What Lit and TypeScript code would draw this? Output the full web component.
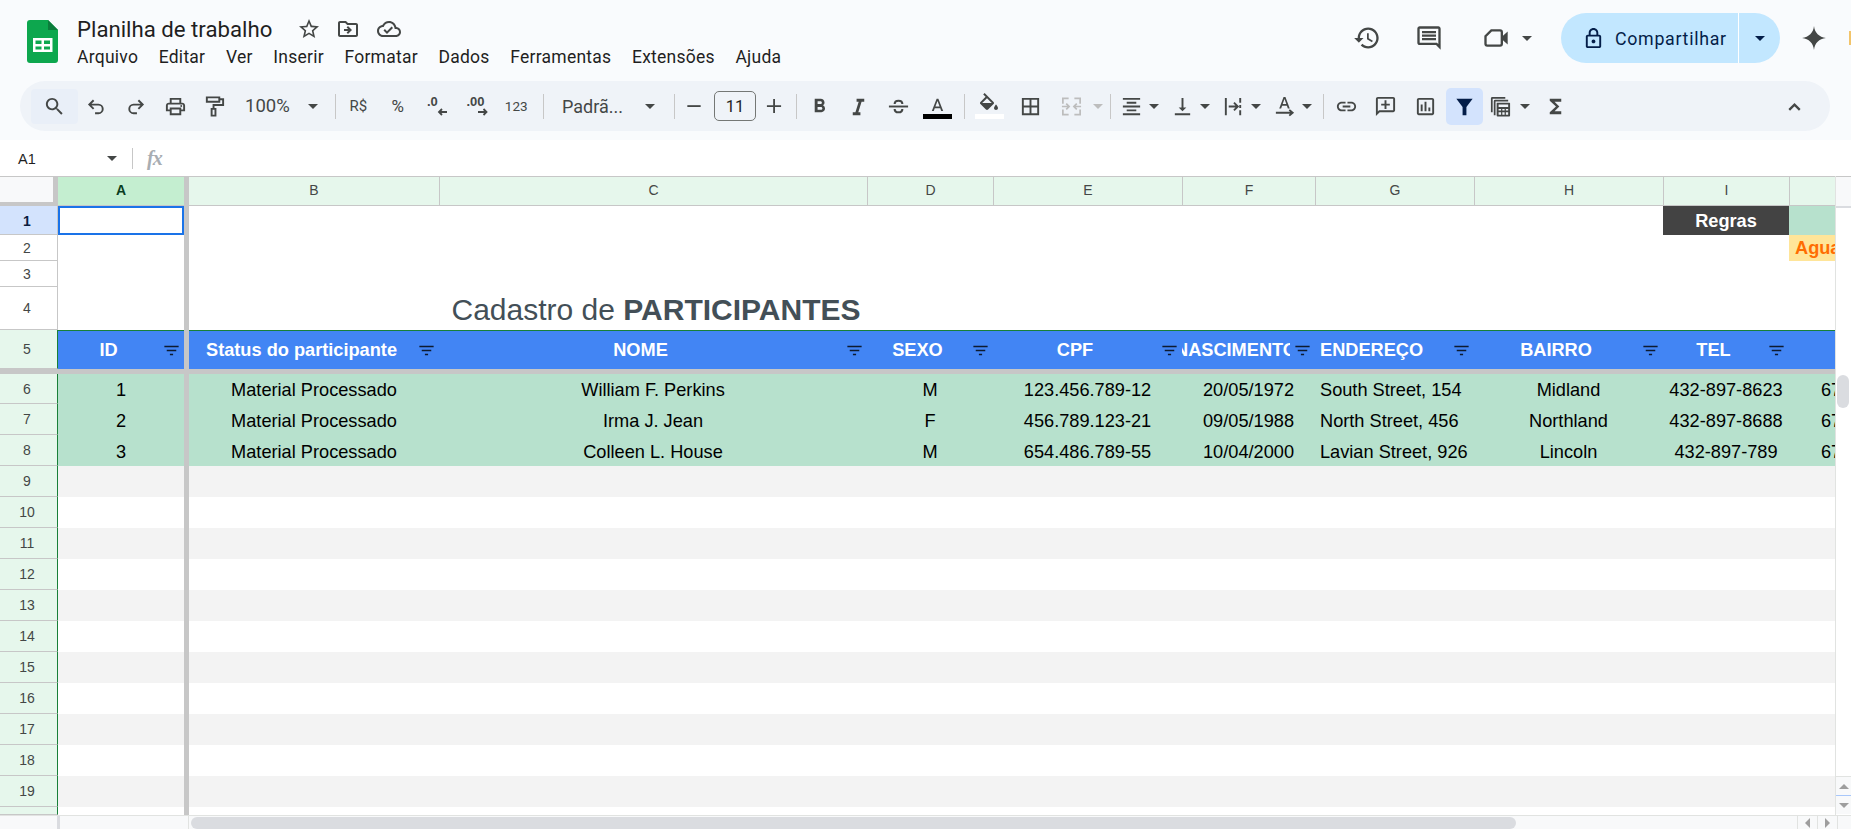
import { LitElement, html, css, svg } from "lit";
import { customElement } from "lit/decorators.js";

const P: Record<string, any> = {
  star: svg`<path d="M22 9.24l-7.19-.62L12 2 9.19 8.63 2 9.24l5.46 4.73L5.82 21 12 17.27 18.18 21l-1.63-7.03L22 9.24zM12 15.4l-3.76 2.27 1-4.28-3.32-2.88 4.38-.38L12 6.1l1.71 4.04 4.38.38-3.32 2.88 1 4.28L12 15.4z"/>`,
  folder: svg`<path d="M20 6h-8l-2-2H4c-1.1 0-1.99.9-1.99 2L2 18c0 1.1.9 2 2 2h16c1.1 0 2-.9 2-2V8c0-1.1-.9-2-2-2zm0 12H4V6h5.17l2 2H20v10z"/><path d="M12.16 12H8v2h4.16l-1.59 1.59L11.98 17 16 13l-4.01-4-1.41 1.41z"/>`,
  cloud: svg`<path d="M19.35 10.04C18.67 6.59 15.64 4 12 4 9.11 4 6.6 5.64 5.35 8.04 2.34 8.36 0 10.91 0 14c0 3.31 2.69 6 6 6h13c2.76 0 5-2.24 5-5 0-2.64-2.05-4.78-4.65-4.96zM19 18H6c-2.21 0-4-1.79-4-4 0-2.05 1.53-3.76 3.56-3.97l1.07-.11.5-.95C8.08 7.14 9.94 6 12 6c2.62 0 4.88 1.86 5.39 4.43l.3 1.5 1.53.11c1.56.1 2.78 1.41 2.78 2.96 0 1.65-1.35 3-3 3zm-9-3.82l-2.09-2.09L6.5 13.5 10 17l6.01-6.01-1.41-1.41z"/>`,
  history: svg`<path d="M13 3c-4.97 0-9 4.03-9 9H1l3.89 3.89.07.14L9 12H6c0-3.87 3.13-7 7-7s7 3.13 7 7-3.13 7-7 7c-1.93 0-3.68-.79-4.94-2.06l-1.42 1.42C8.27 19.99 10.51 21 13 21c4.97 0 9-4.03 9-9s-4.03-9-9-9zm-1 5v5l4.28 2.54.72-1.21-3.5-2.08V8H12z"/>`,
  chat: svg`<path d="M21.99 4c0-1.1-.89-2-1.99-2H4c-1.1 0-2 .9-2 2v12c0 1.1.9 2 2 2h14l4 4-.01-18zM20 4v13.17L18.83 16H4V4h16zM6 12h12v2H6zm0-3h12v2H6zm0-3h12v2H6z"/>`,
  video: svg`<path d="M8 5.5h7.5a1.5 1.5 0 0 1 1.5 1.5v10a1.5 1.5 0 0 1-1.5 1.5H4.5A1.5 1.5 0 0 1 3 17V10.5z" fill="none" stroke="currentColor" stroke-width="2"/><path d="M17.5 10.5L22 6.5v11l-4.5-4z"/>`,
  lock: svg`<path d="M18 8h-1V6c0-2.76-2.24-5-5-5S7 3.24 7 6v2H6c-1.1 0-2 .9-2 2v10c0 1.1.9 2 2 2h12c1.1 0 2-.9 2-2V10c0-1.1-.9-2-2-2zM9 6c0-1.66 1.34-3 3-3s3 1.34 3 3v2H9V6zm9 14H6V10h12v10zm-6-3c1.1 0 2-.9 2-2s-.9-2-2-2-2 .9-2 2 .9 2 2 2z"/>`,
  gemini: svg`<path d="M12 1C12.7 7.3 16.7 11.3 23 12c-6.3.7-10.3 4.7-11 11-.7-6.3-4.7-10.3-11-11 6.3-.7 10.3-4.7 11-11z"/>`,
  search: svg`<path d="M15.5 14h-.79l-.28-.27C15.41 12.59 16 11.11 16 9.5 16 5.91 13.09 3 9.5 3S3 5.91 3 9.5 5.91 16 9.5 16c1.61 0 3.09-.59 4.23-1.57l.27.28v.79l5 4.99L20.49 19l-4.99-5zm-6 0C7.01 14 5 11.99 5 9.5S7.01 5 9.5 5 14 7.01 14 9.5 11.99 14 9.5 14z"/>`,
  undo: svg`<path d="M9 14.5L4.5 10 9 5.5M5 10h9a4.5 4.5 0 0 1 0 9h-3.5" fill="none" stroke="currentColor" stroke-width="2"/>`,
  redo: svg`<path d="M15 14.5L19.5 10 15 5.5M19 10h-9a4.5 4.5 0 0 0 0 9h3.5" fill="none" stroke="currentColor" stroke-width="2"/>`,
  print: svg`<path d="M19 8h-1V3H6v5H5c-1.66 0-3 1.34-3 3v6h4v4h12v-4h4v-6c0-1.66-1.34-3-3-3zM8 5h8v3H8V5zm8 12v2H8v-4h8v2zm2-2v-2H6v2H4v-4c0-.55.45-1 1-1h14c.55 0 1 .45 1 1v4h-2z"/><circle cx="18" cy="11.5" r="1"/>`,
  paint: svg`<path d="M4 2.5h13v4.5H4zM17 4.5h4v6H11v4M9 14.5h4v7H9z" fill="none" stroke="currentColor" stroke-width="2"/>`,
  minus: svg`<path d="M4 11h16v2.2H4z"/>`,
  plus: svg`<path d="M3.5 11h7.5V3.5h2.2V11h7.3v2.2h-7.3v7.3H11v-7.3H3.5z"/>`,
  bold: svg`<path d="M15.6 10.79c.97-.67 1.65-1.77 1.65-2.79 0-2.26-1.75-4-4-4H7v14h7.04c2.09 0 3.71-1.7 3.71-3.79 0-1.52-.86-2.82-2.15-3.42zM10 6.5h3c.83 0 1.5.67 1.5 1.5s-.67 1.5-1.5 1.5h-3v-3zm3.5 9H10v-3h3.5c.83 0 1.5.67 1.5 1.5s-.67 1.5-1.5 1.5z"/>`,
  italic: svg`<path d="M10 4v3h2.21l-3.42 11H6v3h8v-3h-2.21l3.42-11H18V4z"/>`,
  strike: svg`<path d="M2 11h20v2H2z"/><path d="M8 9.5C8 7.5 9.6 6 12 6s4 1.5 4 3.5M8 14.5c0 2 1.6 3.5 4 3.5s4-1.5 4-3.5" fill="none" stroke="currentColor" stroke-width="2.2"/>`,
  atext: svg`<path d="M11 3L5.5 17h2.25l1.12-3h6.25l1.12 3h2.25L13 3h-2zm-1.38 9L12 5.67 14.38 12H9.62z"/>`,
  fill: svg`<path d="M16.56 8.94L7.62 0 6.21 1.41l2.38 2.38-5.15 5.15c-.59.59-.59 1.54 0 2.12l5.5 5.5c.29.29.68.44 1.06.44s.77-.15 1.06-.44l5.5-5.5c.59-.58.59-1.53 0-2.12zM5.21 10L10 5.21 14.79 10H5.21zM19 11.5s-2 2.17-2 3.5c0 1.1.9 2 2 2s2-.9 2-2c0-1.33-2-3.5-2-3.5z"/>`,
  borders: svg`<path d="M3 3v18h18V3H3zm8 16H5v-6h6v6zm0-8H5V5h6v6zm8 8h-6v-6h6v6zm0-8h-6V5h6v6z"/>`,
  merge: svg`<path d="M3 9V3.5h6M3 15v5.5h6M21 9V3.5h-6M21 15v5.5h-6" fill="none" stroke="currentColor" stroke-width="1.8"/><path d="M2 12h7M6.5 9l3 3-3 3M22 12h-7M17.5 9l-3 3 3 3" fill="none" stroke="currentColor" stroke-width="1.8"/>`,
  align: svg`<path d="M7 15v2h10v-2H7zm-4 6h18v-2H3v2zm0-8h18v-2H3v2zm4-6v2h10V7H7zM3 3v2h18V3H3z"/>`,
  valign: svg`<path d="M16 13h-3V3h-2v10H8l4 4 4-4zM4 19v2h16v-2H4z"/>`,
  wrap: svg`<path d="M4 3v18M19 3v5M19 10.5v3M19 16v5M7 12h9M12.5 8l4 4-4 4" fill="none" stroke="currentColor" stroke-width="2"/>`,
  rotate: svg`<path d="M11 2L6.5 14h2l1-2.8h5l1 2.8h2L13 2h-2zm-.9 7.5L12 4.3l1.9 5.2h-3.8z"/><path d="M3 18.5h16.5M17 15.5l3.5 3-3.5 3" fill="none" stroke="currentColor" stroke-width="2"/>`,
  link: svg`<path d="M3.9 12c0-1.71 1.39-3.1 3.1-3.1h4V7H7c-2.76 0-5 2.24-5 5s2.24 5 5 5h4v-1.9H7c-1.71 0-3.1-1.39-3.1-3.1zM8 13h8v-2H8v2zm9-6h-4v1.9h4c1.71 0 3.1 1.39 3.1 3.1s-1.39 3.1-3.1 3.1h-4V17h4c2.76 0 5-2.24 5-5s-2.24-5-5-5z"/>`,
  comment: svg`<path d="M20 2H4c-1.1 0-2 .9-2 2v18l4-4h14c1.1 0 2-.9 2-2V4c0-1.1-.9-2-2-2zm0 14H5.2L4 17.2V4h16v12z"/><path d="M11 5.5h2V9h3.5v2H13v3.5h-2V11H7.500V9H11z"/>`,
  chart: svg`<path d="M9 17H7v-7h2v7zm4 0h-2V7h2v10zm4 0h-2v-4h2v4zm2 2H5V5h14v14zm0-16H5c-1.1 0-2 .9-2 2v14c0 1.1.9 2 2 2h14c1.1 0 2-.9 2-2V5c0-1.1-.9-2-2-2z"/>`,
  funnel: svg`<path d="M3.5 4h17l-6.5 8.5V21h-4v-8.5z"/>`,
  calc: svg`<path d="M2 18V3.5A1.5 1.5 0 0 1 3.5 2H17v1.8H3.8V18zM5 21V6.5A1.5 1.5 0 0 1 6.5 5H20v1.8H6.8V21z"/><path d="M8 8h13.5a.5.5 0 0 1 .5.5v13a1 1 0 0 1-1 1H9a1 1 0 0 1-1-1zm2 2v2.5h10V10zm0 4.5v1.8h2.6v-1.8zm3.9 0v1.8h2.4v-1.8zm3.7 0v1.8H20v-1.8zM10 18v2.5h2.6V18zm3.9 0v2.5h2.4V18zm3.7 0v2.5H20V18z" fill-rule="evenodd"/>`,
  sigma: svg`<path d="M18 4H6v2l6.5 6L6 18v2h12v-3h-7l5-5-5-5h7z"/>`,
  chevron: svg`<path d="M6.5 15.5L12 10l5.5 5.5" fill="none" stroke="currentColor" stroke-width="2.4"/>`,
  filt: svg`<path d="M10 18h4v-2h-4v2zM3 6v2h18V6H3zm3 7h12v-2H6v2z"/>`,
};

const ic = (n: string, cls = "") => html`<svg class="i ${cls}" viewBox="0 0 24 24" fill="currentColor">${P[n]}</svg>`;
const caret = (cls = "") => html`<span class="caret ${cls}"></span>`;
const btn = (n: string, cls = "") => html`<span class="b ${cls}">${ic(n)}</span>`;
const grp = (n: string) => html`<span class="g">${ic(n)}${caret()}</span>`;
const sep = (cls = "") => html`<span class="sep ${cls}"></span>`;

const MENU = ["Arquivo", "Editar", "Ver", "Inserir", "Formatar", "Dados", "Ferramentas", "Extensões", "Ajuda"];
const COLS = ["B", "C", "D", "E", "F", "G", "H", "I", ""];
const HEADS: [string, string][] = [
  ["Status do participante", "ctr"], ["NOME", "ctr"], ["SEXO", "ctr"], ["CPF", "ctr"],
  ["NASCIMENTO", "ctr"], ["ENDEREÇO", "lft"], ["BAIRRO", "ctr"], ["TEL", "ctr"], ["", "ctr"],
];
const DATA = [
  ["1", "Material Processado", "William F. Perkins", "M", "123.456.789-12", "20/05/1972", "South Street, 154", "Midland", "432-897-8623", "67"],
  ["2", "Material Processado", "Irma J. Jean", "F", "456.789.123-21", "09/05/1988", "North Street, 456", "Northland", "432-897-8688", "67"],
  ["3", "Material Processado", "Colleen L. House", "M", "654.486.789-55", "10/04/2000", "Lavian Street, 926", "Lincoln", "432-897-789", "67"],
];

@customElement("app-root")
export class AppRoot extends LitElement {
  static styles = css`
    :host { display: block; width: 100%; height: 829px; overflow: hidden; background: #f9fbfd; font-family: Roboto, "Liberation Sans", sans-serif; color: #1f1f1f; }
    * { box-sizing: border-box; }
    .i { display: block; width: 23px; height: 23px; flex: none; color: #444746; }

    .top { display: flex; height: 81px; padding-left: 27px; }
    .logo { width: 31px; height: 43px; margin-top: 20px; flex: none; }
    .titles { margin-left: 19px; padding-top: 15px; }
    .tline { display: flex; align-items: center; height: 28px; }
    .tline .name { font-size: 22.2px; line-height: 28px; width: 220px; color: #1f1f1f; flex: none; }
    .tline .i { width: 24px; height: 24px; margin-right: 15px; }
    .tline .i.c { margin-left: 2px; }
    .menu { display: flex; margin-top: 1px; font-size: 17.5px; letter-spacing: .25px; line-height: 26px; color: #1f1f1f; }
    .menu span { margin-right: 20.6px; }
    .right { margin-left: auto; display: flex; align-items: center; height: 76px; }
    .right .i { width: 28px; height: 28px; }
    .hist { margin-right: 34px; }
    .vid { margin-left: 39px; }
    .vcaret { margin-left: 12px; margin-right: 29px; }
    .share { display: flex; align-items: stretch; width: 219px; height: 50px; background: #c2e7ff; border-radius: 25px; color: #041e49; }
    .share .main { display: flex; align-items: center; width: 178px; padding-left: 21px; border-right: 1px solid #fff; font-size: 17.8px; letter-spacing: .7px; white-space: nowrap; }
    .share .main .i { width: 23px; height: 23px; color: #041e49; margin-right: 10px; }
    .share .drop { flex: 1; display: flex; align-items: center; justify-content: center; }
    .caret { display: block; flex: none; width: 0; height: 0; border-left: 5px solid transparent; border-right: 5px solid transparent; border-top: 5px solid #444746; }
    .caret.dk { border-top-color: #041e49; }
    .caret.off { border-top-color: #bdbdbd; }
    .right .gem { width: 26px; height: 26px; margin-left: 21px; margin-right: 22px; }
    .avatar { width: 2px; height: 14px; background: #f2c46a; flex: none; }

    .tb { display: flex; align-items: center; height: 50px; margin: 0 21px 0 20px; padding-left: 11px; border-radius: 25px; background: #eff3f8; color: #444746; }
    .search { display: flex; align-items: center; justify-content: center; width: 47px; height: 35px; margin-right: -1.5px; background: #e9eff8; border-radius: 4px; }
    .b { display: flex; align-items: center; justify-content: center; width: 39.5px; height: 37px; flex: none; font-size: 15px; color: #444746; }
    .g { display: flex; align-items: center; width: 51px; height: 37px; padding-left: 6.5px; flex: none; }
    .g .caret { margin-left: 5.5px; }
    .g.mg { margin-left: 4px; }
    .g.mg .caret { margin-left: 9.5px; }
    .sep { display: block; width: 1px; height: 25px; background: #c7c7c7; flex: none; }
    .s1 { margin: 0 3px 0 10px; }
    .s2 { margin: 0 3.5px 0 6.5px; }
    .s3 { margin: 0 3px 0 9px; }
    .s4 { margin: 0 3px 0 6px; }
    .s5 { margin: 0 4.25px 0 6.5px; }
    .s6 { margin: 0 3px 0 5px; }
    .s7 { margin: 0 2.5px 0 5px; }
    .zoomb { display: flex; align-items: center; width: 90px; padding: 0 6.5px 0 10.5px; font-size: 18.5px; flex: none; }
    .zoomb .caret, .fontb .caret { margin-left: auto; }
    .fontb { display: flex; align-items: center; width: 118px; padding: 0 10px 0 15px; font-size: 18px; flex: none; white-space: nowrap; }
    .pct { font-size: 17px; }
    .num { font-size: 13.5px; }
    .sz { display: flex; align-items: center; justify-content: center; width: 42px; height: 30px; margin-left: 4px; border: 1px solid #747775; border-radius: 5px; font-size: 16.5px; color: #1f1f1f; flex: none; }
    .pm { display: flex; align-items: center; justify-content: center; width: 32px; flex: none; }
    .pm.pl { margin-left: 1.5px; }
    .pm .i { width: 20px; height: 20px; }
    .colr { display: flex; flex-direction: column; align-items: center; margin-top: 3px; }
    .atx { display: block; width: 21px; height: 15.75px; color: #444746; }
    .fil { display: block; width: 24px; height: 19px; color: #444746; margin-top: -3px; }
    .bar { display: block; width: 29px; height: 5px; background: #000; margin-top: 3px; }
    .bar.w { background: #fff; margin-top: 2px; }
    .dec { width: 28px; height: 28px; flex: none; fill: #444746; font: 700 13px "Liberation Sans", sans-serif; }
    .bord { margin-left: 1.5px; }
    .active { background: #d3e3fd; border-radius: 5px; width: 37px; margin: 0 1.25px; }
    .active .i { color: #041e49; }
    .i.off { color: #bdbdbd; }
    .calc { display: flex; align-items: center; width: 52px; height: 37px; padding-left: 6px; margin-left: -1px; flex: none; }
    .calc .caret { margin-left: 7.5px; }
    .chev { margin-left: auto; margin-right: 24px; }

    .fx { display: flex; align-items: center; height: 36px; margin-top: 9px; background: #fff; padding-left: 18px; }
    .fx .ref { width: 89px; font-size: 14.5px; color: #1f1f1f; font-family: "Liberation Sans", sans-serif; padding-top: 1px; }
    .fx .div { width: 1px; height: 21px; background: #c7c7c7; margin-left: 15px; }
    .fx .fxl { margin-left: 14px; font: italic 700 20px "Liberation Serif", serif; color: #a8adb2; letter-spacing: -1px; }

    .area { display: flex; height: 639px; }
    .sheet { width: 1835px; flex: none; overflow: hidden; background: #fff; font-family: "Liberation Sans", Arial, sans-serif; }
    .row { display: grid; grid-template-columns: 58px 126px 5px 250px 428px 126px 189px 133px 159px 189px 126px 46px; }
    .r30 { height: 30px; } .r29 { height: 29px; } .r26 { height: 26px; } .r43 { height: 43px; } .r39 { height: 39px; } .r31 { height: 31px; } .r8 { height: 8px; }
    .rn { display: flex; align-items: center; justify-content: center; padding-right: 3px; font-size: 14px; color: #444746; background: #fff; border-bottom: 1px solid #c7c7c7; border-right: 1px solid #c7c7c7; }
    .rn.gr { background: #e6f7ec; border-right: 1px solid #188038; }
    .rn.sel { background: #d3e3fd; font-weight: 700; color: #0b1d40; border-right-color: #c7c7c7; padding-top: 1px; }
    .fz { background: #c7c7c7; }
    .corner { background: #f8f9fa; border-right: 5px solid #c7c7c7; border-bottom: 4px solid #c7c7c7; border-top: 1px solid #c7c7c7; }
    .ch { display: flex; align-items: center; justify-content: center; padding-bottom: 2px; font-size: 14px; color: #444746; background: #e6f7ec; border-top: 1px solid #c7c7c7; border-bottom: 1px solid #c7c7c7; border-left: 1px solid #c7c7c7; }
    .ch.first { border-left: 0; }
    .ch.sel { background: #c4eed0; font-weight: 700; color: #0a3d1f; border-left: 0; }
    .a1 { border: 2px solid #1a73e8; }
    .regras { display: flex; align-items: center; justify-content: center; padding-top: 1px; background: #434343; color: #fff; font-weight: 700; font-size: 18.2px; }
    .j1 { background: #b7e1cd; }
    .j2 { background: #ffe599; color: #ff6d01; font-weight: 700; font-size: 18.2px; padding-left: 6px; display: flex; align-items: center; overflow: hidden; white-space: nowrap; }
    .ttl { font-size: 30px; color: #434f57; display: flex; align-items: flex-end; justify-content: center; white-space: nowrap; line-height: 34px; padding-left: 6px; padding-bottom: 3px; }
    .hd { display: flex; align-items: center; background: #4285f4; border-top: 1px solid #188038; color: #fff; font-weight: 700; font-size: 18.2px; overflow: hidden; }
    .hd .t { flex: 1; min-width: 0; display: flex; overflow: hidden; white-space: nowrap; }
    .hd .t.ctr { justify-content: center; }
    .hd .t.lft { padding-left: 5px; }
    .hd .f { flex: none; width: 25px; display: flex; align-items: center; justify-content: center; }
    .hd .f .i { width: 19px; height: 19px; color: #0d1b30; }
    .hb { background: #4285f4; border-top: 1px solid #188038; }
    .hbar { height: 5px; background: #c7c7c7; }
    .d { display: flex; align-items: center; justify-content: center; padding-top: 3px; font-size: 18.2px; color: #000; white-space: nowrap; overflow: hidden; }
    .d.grn { background: #b7e1cd; }
    .d.lft { justify-content: flex-start; padding-left: 5px; }
    .d.jc { justify-content: flex-start; padding-left: 32px; }
    .alt { background: #f3f3f3; }

    .vs { flex: 1; display: flex; flex-direction: column; border-left: 1px solid #e1e3e1; background: #fff; }
    .vh { height: 30px; background: #f8f9fa; border-top: 1px solid #c7c7c7; }
    .vl { height: 2px; background: #dadce0; }
    .vgap { height: 167px; }
    .thumb { height: 33px; width: 12px; margin-left: 1px; border-radius: 6px; background: #dadce0; }
    .vsp { flex: 1; }
    .vb { height: 19px; display: flex; align-items: center; justify-content: center; border-top: 1px solid #e1e3e1; background: #f8f9fa; }
    .vb.blue { border-top-color: #a8c7fa; }
    .tri { display: block; width: 0; height: 0; border-left: 5px solid transparent; border-right: 5px solid transparent; }
    .up { border-bottom: 5px solid #9e9e9e; } .dn { border-top: 5px solid #9e9e9e; }
    .lf { border: 5px solid transparent; border-left: 0; border-right: 5px solid #9e9e9e; }
    .rt { border: 5px solid transparent; border-right: 0; border-left: 5px solid #9e9e9e; }
    .vend { height: 1px; }

    .hs { display: flex; height: 14px; background: #f8f9fa; border-top: 1px solid #e1e3e1; }
    .hs .a { width: 57px; flex: none; }
    .hs .s { width: 3px; flex: none; background: #dadce0; }
    .hs .m { width: 129px; flex: none; border-right: 1px solid #e1e3e1; }
    .hs .bl { width: 2px; flex: none; }
    .hs .th { width: 1325px; flex: none; height: 12px; margin-top: 1px; border-radius: 6px; background: #dadce0; }
    .hs .sp { flex: 1; }
    .hs .n { width: 20px; flex: none; display: flex; align-items: center; justify-content: center; border-left: 1px solid #e1e3e1; }
    .hs .e { width: 14px; flex: none; border-left: 1px solid #e1e3e1; }
  `;

  private row(n: number | string, cls: string, a: any, rest: any[], rnCls = "") {
    return html`<div class="row ${cls}"><div class="rn ${rnCls}">${n}</div>${a}<div class="fz"></div>${rest}</div>`;
  }

  render() {
    const empties = (k = 9) => Array.from({ length: k }, () => html`<div></div>`);
    const rows: any[] = [];
    rows.push(html`<div class="row r30"><div class="corner"></div><div class="ch sel">A</div><div class="fz"></div>${COLS.map((c, i) => html`<div class="ch ${i === 0 ? "first" : ""}">${c}</div>`)}</div>`);
    rows.push(this.row(1, "r29", html`<div class="a1"></div>`, [...empties(7), html`<div class="regras">Regras</div>`, html`<div class="j1"></div>`], "sel"));
    rows.push(this.row(2, "r26", html`<div></div>`, [...empties(8), html`<div class="j2">Aguardando</div>`]));
    rows.push(this.row(3, "r26", html`<div></div>`, empties()));
    rows.push(this.row(4, "r43", html`<div></div>`, [html`<div></div>`, html`<div class="ttl"><span>Cadastro de <b>PARTICIPANTES</b></span></div>`, ...empties(7)]));
    const hcell = (t: string, k: string) => html`<div class="hd"><div class="t ${k}">${t}</div><div class="f">${ic("filt")}</div></div>`;
    rows.push(this.row(5, "r39", hcell("ID", "ctr"), HEADS.map(([t, k], i) => (i === 8 ? html`<div class="hb"></div>` : hcell(t, k))), "gr"));
    rows.push(html`<div class="hbar"></div>`);
    DATA.forEach((d, i) => {
      const h = i === 0 ? "r30" : "r31";
      rows.push(this.row(6 + i, h, html`<div class="d grn">${d[0]}</div>`, d.slice(1).map((v, j) => html`<div class="d grn ${j === 5 ? "lft" : ""} ${j === 8 ? "jc" : ""}">${v}</div>`), "gr"));
    });
    for (let n = 9; n <= 19; n++) {
      const k = n % 2 ? "alt" : "";
      rows.push(this.row(n, "r31", html`<div class=${k}></div>`, Array.from({ length: 9 }, () => html`<div class=${k}></div>`), "gr"));
    }
    rows.push(this.row("", "r8", html`<div></div>`, empties(), "gr"));

    return html`
      <div class="top">
        <svg class="logo" viewBox="0 0 31 43">
          <path d="M3 0h18l10 10v30a3 3 0 0 1-3 3H3a3 3 0 0 1-3-3V3a3 3 0 0 1 3-3z" fill="#0da74e"/>
          <path d="M21 0l10 10H21z" fill="#0b7d3b"/>
          <path d="M6 18h19.5v14H6z" fill="#fff"/>
          <path d="M8.5 20.5h6v3.5h-6zM17 20.5h6v3.5h-6zM8.5 26.5h6v3h-6zM17 26.5h6v3h-6z" fill="#0da74e"/>
        </svg>
        <div class="titles">
          <div class="tline"><span class="name">Planilha de trabalho</span>${ic("star")}${ic("folder")}${ic("cloud", "c")}</div>
          <div class="menu">${MENU.map((m) => html`<span>${m}</span>`)}</div>
        </div>
        <div class="right">
          ${ic("history", "hist")}${ic("chat")}${ic("video", "vid")}${caret("vcaret")}
          <div class="share">
            <div class="main">${ic("lock")}Compartilhar</div>
            <div class="drop">${caret("dk")}</div>
          </div>
          ${ic("gemini", "gem")}
          <div class="avatar"></div>
        </div>
      </div>

      <div class="tb">
        <span class="search">${ic("search")}</span>
        ${btn("undo")}${btn("redo")}${btn("print")}${btn("paint")}
        <span class="zoomb">100%${caret()}</span>
        ${sep("s1")}
        <span class="b">R$</span><span class="b pct">%</span>
        <span class="b"><svg class="dec" viewBox="0 0 28 28"><text x="4" y="14">.0</text><path d="M24 20H16M19 17l-3 3 3 3" fill="none" stroke="#444746" stroke-width="1.8"/></svg></span>
        <span class="b"><svg class="dec" viewBox="0 0 28 28"><text x="3.5" y="14">.00</text><path d="M15 20h8.5M20.5 17l3 3-3 3" fill="none" stroke="#444746" stroke-width="1.8"/></svg></span>
        <span class="b num">123</span>
        ${sep("s2")}
        <span class="fontb">Padrã...${caret()}</span>
        ${sep("s3")}
        <span class="pm">${ic("minus")}</span><span class="sz">11</span><span class="pm pl">${ic("plus")}</span>
        ${sep("s4")}
        ${btn("bold")}${btn("italic")}${btn("strike")}
        <span class="b"><span class="colr"><svg class="atx" viewBox="0 0 24 18" fill="currentColor">${P.atext}</svg><span class="bar"></span></span></span>
        ${sep("s5")}
        <span class="b"><span class="colr"><svg class="fil" viewBox="0 0 24 19" fill="currentColor">${P.fill}</svg><span class="bar w"></span></span></span>
        ${btn("borders", "bord")}
        <span class="g mg">${ic("merge", "off")}${caret("off")}</span>
        ${sep("s6")}
        ${grp("align")}${grp("valign")}${grp("wrap")}${grp("rotate")}
        ${sep("s7")}
        ${btn("link")}${btn("comment")}${btn("chart")}
        <span class="b active">${ic("funnel")}</span>
        <span class="calc">${ic("calc")}${caret()}</span>
        ${btn("sigma")}
        <span class="chev">${ic("chevron")}</span>
      </div>

      <div class="fx">
        <span class="ref">A1</span>${caret()}<span class="div"></span><span class="fxl">fx</span>
      </div>

      <div class="area">
        <div class="sheet">${rows}</div>
        <div class="vs">
          <div class="vh"></div><div class="vl"></div><div class="vgap"></div><div class="thumb"></div>
          <div class="vsp"></div>
          <div class="vb"><span class="tri up"></span></div>
          <div class="vb blue"><span class="tri dn"></span></div>
          <div class="vend"></div>
        </div>
      </div>
      <div class="hs">
        <div class="a"></div><div class="s"></div><div class="m"></div><div class="bl"></div><div class="th"></div>
        <div class="sp"></div>
        <div class="n"><span class="tri lf"></span></div><div class="n"><span class="tri rt"></span></div><div class="e"></div>
      </div>
    `;
  }
}
